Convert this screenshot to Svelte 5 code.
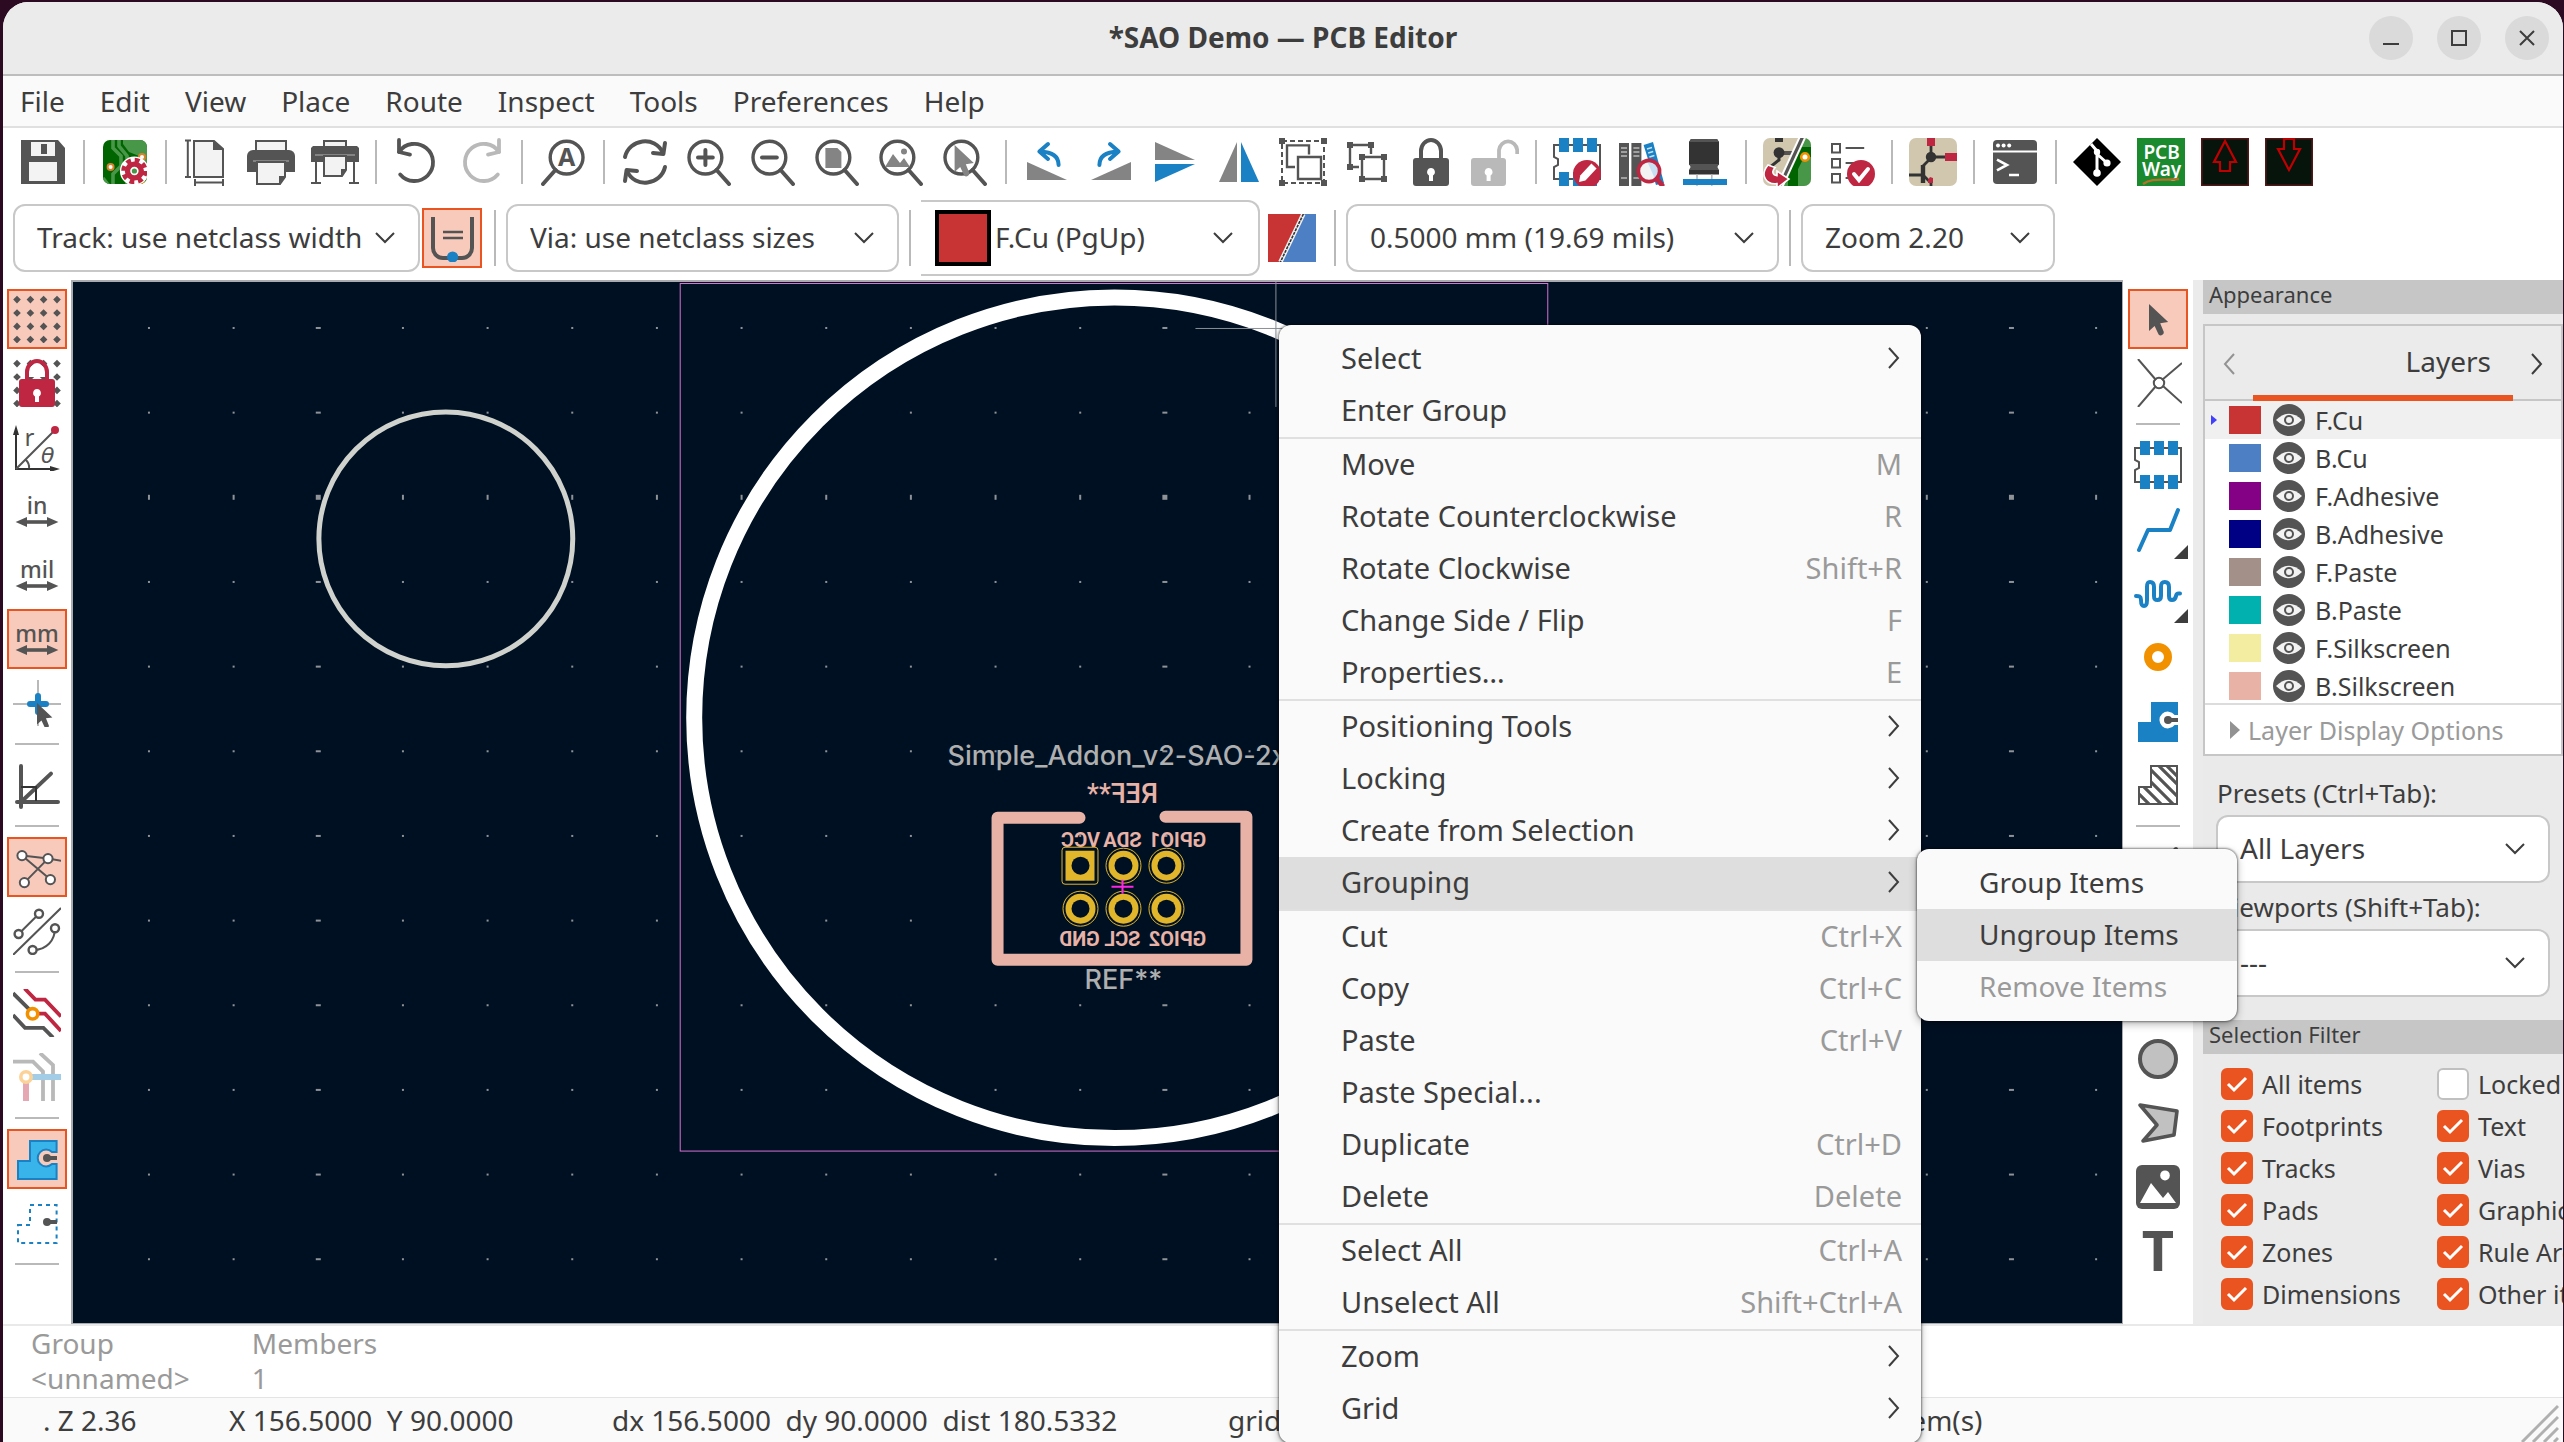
<script lang="ts">
  type Tool = { icon: string; label: string; active?: boolean; more?: boolean; disabled?: boolean };
  type MenuItem = { label: string; keys?: string; sub?: boolean; open?: boolean; disabled?: boolean };

  const GREY = "#545454";
  const BLUE = "#1a81c4";
  const RED = "#bf2641";

  const cursor = (x: number, y: number, fill = GREY) =>
    `<path transform="translate(${x} ${y})" fill="${fill}" d="M0 0V13.5L2.8 11l2 4.2a1.5 1.5 0 0 0 2.6-1.2L5.6 9.6l4-.6z"/>`;
  const lens = (inner: string) =>
    `<g fill="none" stroke="${GREY}" stroke-width="1.7" stroke-linecap="round"><circle cx="10.2" cy="9.8" r="8.2"/><path stroke-width="2" d="M15.8 16l6.2 7"/></g>${inner}`;
  const padlock = (fill: string, hole = "#fff") =>
    `<path fill="none" stroke="${fill}" stroke-width="2" d="M7 11V6.500a5 5.500 0 0 1 10 0V11"/><rect x="3" y="10" width="18" height="14" rx="1.500" fill="${fill}"/><path fill="${hole}" d="M12 15a2 2 0 0 0-1 3.700V21.500h2V18.700A2 2 0 0 0 12 15z"/>`;
  const chip = `<path fill="none" stroke="${GREY}" d="M3 3.500H.5v6l2 1v3l-2 1v6H23.500v-17z"/><path fill="${BLUE}" d="M3 0h5v7H3zM10 0h5v7h-5zM17 0h5v7h-5zM3 17h5v7H3zM10 17h5v7h-5zM17 17h5v7h-5z"/>`;
  const zoneDot = `<circle cx="17" cy="11.500" r="2" fill="${GREY}"/><path stroke="${GREY}" stroke-width="2" d="M17 11.500h5"/>`;
  const unit = (name: string) =>
    `<text x="12" y="13.400" font-family="Noto Sans" font-size="11.500" font-weight="500" text-anchor="middle" fill="${GREY}">${name}</text><path stroke="${GREY}" stroke-width="1.800" d="M5 17.500h14"/><path fill="${GREY}" d="M1.300 17.500L7 15v5zM22.700 17.500L17 15v5z"/>`;

  function dots(): string {
    let out = "";
    for (const x of [2, 8.7, 15.3, 22]) {
      for (const y of [2.3, 9, 15.7, 22.3]) {
        out += `<path fill="${GREY}" d="M${x - 1.9} ${y}l1.900-1.900 1.900 1.900-1.900 1.900z"/>`;
      }
    }
    return out;
  }

  const icons: Record<string, string> = {
    save: `<path fill="${GREY}" d="M1 1h18.500L23 5v18H1z"/><path fill="#f3f3f3" d="M6 2h12v7H6zM5 12h14v9.500H5z"/><path fill="${GREY}" d="M11 3h3v5h-3z"/>`,
    setup: `<clipPath id="bs"><rect x="1" y="1" width="22" height="22" rx="3.500"/></clipPath><g clip-path="url(#bs)"><path fill="#006400" d="M0 0h24v24H0z"/><path fill="#489648" d="M11 0h13v13h-2l-3-4-5-2-3-4z"/><path fill="none" stroke="#489648" stroke-width="1.800" d="M6 0v5l4 4v5l-4 4v6M9 0v4l4 5v15M1 20l3 4"/><circle cx="4.800" cy="14.500" r="1.500" fill="#fff" stroke="#d9822b"/><circle cx="20.500" cy="9.500" r="1.500" fill="#fff" stroke="#d9822b"/><circle cx="20.500" cy="22.500" r="1.500" fill="#f29100"/><circle cx="16.700" cy="16.500" r="4.500" fill="none" stroke="#fff" stroke-width="5.500"/><circle cx="16.700" cy="16.500" r="5.500" fill="none" stroke="${RED}" stroke-width="2.200" stroke-dasharray="2.400 1.920"/><circle cx="16.700" cy="16.500" r="3.400" fill="#489648" stroke="${RED}" stroke-width="2.800"/><circle cx="16.700" cy="16.500" r="1.700" fill="#489648" stroke="#fff" stroke-width=".8"/></g>`,
    page: `<path fill="#f3f3f3" stroke="${GREY}" d="M5.500 1.500h10l4.500 4V19.500H5.500z"/><path fill="${GREY}" d="M15 1l5.500 5H15z"/><path fill="none" stroke="${GREY}" d="M1 1.200h3M1 19.500h3M2.400 1v18.500M6 20.500v3.500M20 20.500v3.500M6 22.300h14"/>`,
    print: `<path fill="#f3f3f3" stroke="${GREY}" d="M4.500 1.500h15V8h-15z"/><path fill="${GREY}" d="M3 6h18a3 3 0 0 1 3 3v8H0V9a3 3 0 0 1 3-3z"/><path stroke="#848484" d="M3 11.500h18"/><path fill="#f3f3f3" stroke="${GREY}" d="M5 12h14v7.500L16.500 23H5z"/><path fill="${GREY}" d="M16 23v-4h3.500z"/>`,
    plot: `<path fill="#f3f3f3" stroke="${GREY}" d="M6.500 1.500h11V5h-11z"/><path fill="${GREY}" d="M1 4h22l1 1v7H0V5z"/><path stroke="#848484" d="M2 8.500h20"/><path fill="#f3f3f3" stroke="${GREY}" d="M6.500 9h11v7l-2 3h-9z"/><path fill="${GREY}" d="M15 19v-3.500h3z"/><path fill="none" stroke="${GREY}" d="M2.500 12v10.500M21.500 12v10.500M0 22.500h5M19 22.500h5"/>`,
    undo: `<g fill="none" stroke="${GREY}" stroke-width="1.900" stroke-linecap="round" stroke-linejoin="round"><path d="M3 7A9.300 9.300 0 1 1 3.600 18.200"/><path d="M3 1v6l5.500 1.300"/></g>`,
    redo: `<g fill="none" stroke="#b9b9b9" stroke-width="1.900" stroke-linecap="round" stroke-linejoin="round"><path d="M21 7A9.300 9.300 0 1 0 20.400 18.200"/><path d="M21 1v6l-5.500 1.300"/></g>`,
    find: `<g fill="none" stroke="${GREY}" stroke-width="1.700" stroke-linecap="round"><circle cx="13.800" cy="9.800" r="8.200"/><path stroke-width="2" d="M8.200 16L2 23"/></g><text x="13.800" y="14.200" text-anchor="middle" font-family="Noto Sans" font-weight="700" font-size="12.500" fill="${GREY}">A</text>`,
    refresh: `<g fill="none" stroke="${GREY}" stroke-width="2" stroke-linecap="round" stroke-linejoin="round"><path d="M2 9.500C4 .5 17 -1.500 21 7.500"/><path d="M22 2.500l-.8 5.500-5.200-.5"/><path d="M22 14.500C20 23.500 7 25.500 3 16.500"/><path d="M2 21.500l.8-5.500 5.200.5"/></g>`,
    zoomIn: lens(`<path stroke="${GREY}" stroke-width="2" stroke-linecap="round" d="M6.500 9.800h7.400M10.200 6v7.500"/>`),
    zoomOut: lens(`<path stroke="${GREY}" stroke-width="2" stroke-linecap="round" d="M6.500 9.800h7.400"/>`),
    zoomFit: lens(`<path fill="#848484" d="M6.200 5h6l2 2v8H6.200z"/>`),
    zoomObj: lens(`<path fill="#848484" d="M4 14.500l4-6.500 3.500 4.500 2-2.500 3 4.500z"/><circle cx="13.500" cy="6.800" r="1.500" fill="#848484"/>`),
    zoomSel: lens(cursor(6.8, 3.5, "#848484")),
    ccw: `<path fill="#848484" d="M2 12v9h20z"/><path fill="none" stroke="${BLUE}" stroke-width="2" stroke-linecap="round" stroke-linejoin="round" d="M17.800 13.500C17.800 9 14 7 8.500 6.800M12.500 3L8.200 6.800l4.300 3.700"/>`,
    cw: `<path fill="#848484" d="M22 12v9H2z"/><path fill="none" stroke="${BLUE}" stroke-width="2" stroke-linecap="round" stroke-linejoin="round" d="M6.200 13.500C6.200 9 10 7 15.500 6.800M11.500 3l4.300 3.800-4.300 3.700"/>`,
    flipV: `<path fill="#848484" d="M2 2v9h20z"/><path fill="${BLUE}" d="M2 22v-9h20z"/>`,
    flipH: `<path fill="#848484" d="M11 2v20H2z"/><path fill="${BLUE}" d="M13 2v20h9z"/>`,
    group: `<path fill="none" stroke="${GREY}" stroke-dasharray="2.500 1.500" d="M1.500 1.500h21v21h-21z"/><path fill="${GREY}" d="M0 0h3v3H0zM21 0h3v3h-3zM0 21h3v3H0zM21 21h3v3h-3z"/><path fill="none" stroke="${GREY}" stroke-width="1.200" d="M8 14.500H4V3.700h11v4.500M9.500 9.500h11.500v11H9.500z"/>`,
    ungroup: `<path fill="none" stroke="${GREY}" stroke-width="1.200" d="M8 14.500H3.500V3.500H14V8M9.500 9.500h11v11h-11z"/><path fill="${GREY}" d="M2 2h3v3H2zM12.500 2h3v3h-3zM2 13h3v3H2zM8 8h3v3H8zM19 8h3v3h-3zM8 19h3v3H8zM19 19h3v3h-3z"/>`,
    lock: padlock(GREY),
    unlock: `<path fill="none" stroke="#b9b9b9" stroke-width="1.900" d="M14 11V6a4.600 5 0 0 1 9.100 0v2"/><rect y="10" width="17.500" height="14" rx="1.500" fill="#b9b9b9"/><path fill="#fff" d="M8.800 15a2 2 0 0 0-1 3.700V21.500h2V18.700a2 2 0 0 0-1-3.700z"/>`,
    fpEdit: `${chip}<circle cx="17" cy="18" r="7" fill="${RED}"/><path fill="#fff" d="M13 22l.6-3.200 5.600-6 2.600 2.400-5.600 6z"/>`,
    library: `<path fill="${GREY}" d="M1 2.500h5V24H1zM7.200 2.500h5V24h-5z"/><path stroke="#b9b9b9" stroke-width=".8" d="M2 5h3M2 7h3M2 9h3M2 20h3M8.200 5h3M8.200 7h3M8.200 9h3M8.200 20h3"/><path fill="${BLUE}" d="M13.300 3.500L18 2l5.500 20.500-4 1z"/><path stroke="#c8e0f2" stroke-width=".8" d="M15 5.500l2.500-.7M15.600 7.500l2.500-.7M16.200 9.500l2.500-.7"/><circle cx="16" cy="16.500" r="5.300" fill="#f3f3f3"/><path fill="#c8e0f2" d="M15 11.500a5 5 0 0 1 4 9z"/><circle cx="16" cy="16.500" r="5.300" fill="none" stroke="${RED}" stroke-width="1.800"/><path stroke="${RED}" stroke-width="2.500" stroke-linecap="round" d="M20 20.500l2.500 3"/>`,
    view3d: `<path fill="#333" d="M5 .5h13l1 1.500V13.500H4V2z"/><path fill="${GREY}" d="M5 .5h13l1 1.500H4zM4 13h15l-.8 1.500.8 1.500H4l.8-1.500z"/><path fill="#333" d="M4 16h15v2.300H4z"/><path stroke="#b9b9b9" stroke-width=".8" d="M8 18.300V24M15.400 18.300V24"/><path fill="${BLUE}" d="M1 20.500h22v3H1z"/>`,
    update: `<clipPath id="up"><rect width="24" height="24" rx="3.500"/></clipPath><g clip-path="url(#up)"><path fill="#d1c6ae" d="M0 0h24v24H0z"/><path fill="#489648" d="M20 0h4v24H9z"/><path stroke="#006400" stroke-width="5" fill="none" d="M24 7h-5L15 15v9"/><path stroke="${GREY}" stroke-width="2" d="M8 7.500h7"/><circle cx="21" cy="9.500" r="1.900" fill="#fff" stroke="#f29100" stroke-width="1.300"/><circle cx="8" cy="7.300" r="2.700" fill="#333"/><path stroke="#333" fill="none" stroke-width="1.500" d="M8 8v3l-5 4"/><path fill="#333" d="M6 0h4v2H6z"/><path stroke="#fff" stroke-width="3.600" d="M20 -1L8 25"/><path stroke="${GREY}" stroke-width="1.600" d="M20 -1L8 25"/></g><path fill="${RED}" stroke="#fff" stroke-width=".8" d="M2.500 13.500C-2 19 2 23.500 7 22.800V25l6-4.500-6-4v2.300c-2 0-3-2-1-4z"/>`,
    drc: `<path fill="none" stroke="${GREY}" d="M2.500 3H6.500V7.200H2.500zM2.500 10.500H6.500V14.700H2.500zM2.500 18H6.500V22.200H2.500z"/><path stroke="${GREY}" stroke-width="1.100" d="M9.300 5h9.300M9.300 12.500h6M9.300 20h4"/><circle cx="17" cy="18" r="7" fill="${RED}"/><path fill="none" stroke="#fff" stroke-width="2" stroke-linecap="round" d="M13.500 18l2.500 3 4.500-5.500"/>`,
    schematic: `<rect width="24" height="24" rx="3.500" fill="#d1c6ae"/><path fill="none" stroke="#333" stroke-width="1.400" d="M11 3v7l-4 4M11 9.500h8M0 18.500h6M7 18.500l4 4V24"/><path stroke="#333" stroke-width="2.200" d="M7 13.500v9"/><circle cx="11" cy="9.500" r="2.600" fill="#333"/><path fill="${RED}" d="M9 0h4v4H9zM18 7.500h6v4h-6zM9.500 21l1-1.500 1.500.5v2.500H9.500z"/>`,
    console: `<rect x="1" y="1" width="22" height="22" rx="2" fill="${GREY}"/><path stroke="#fff" d="M1 6.800h22"/><g fill="#fff"><circle cx="3.500" cy="3.800" r="1"/><circle cx="6.300" cy="3.800" r="1"/><circle cx="9.100" cy="3.800" r="1"/></g><path fill="none" stroke="#fff" stroke-width="1.300" d="M3 10.800l5 2.700-5 2.700M9 18.500h5"/>`,
    git: `<path fill="#000" d="M12 0l12 12-12 12L0 12z"/><g stroke="#fff" stroke-width="1.500" fill="none"><path d="M9 3l3 3.500V18M12 8l5 4.500"/></g><g fill="#fff"><circle cx="12" cy="7" r="1.600"/><circle cx="12" cy="17.500" r="1.900"/><circle cx="17" cy="12.500" r="1.800"/></g>`,
    pcbway: `<rect width="24" height="24" fill="#1b8a2f"/><g font-family="Noto Sans" font-weight="600" font-size="9.500" fill="#fff" text-anchor="middle"><text x="12.300" y="10.600">PCB</text><text x="12.300" y="19.200">Way</text></g><path fill="none" stroke="#b5702a" stroke-width="1.200" d="M3 23c5-3.500 10-1.500 18-2.500"/>`,
    arrowUp: `<path fill="#06140c" stroke="#501818" stroke-width=".8" d="M.4.4h23.200v23.200H.4z"/><path fill="none" stroke="#c00000" stroke-width="1.100" d="M12 1.500l5.500 10.500h-3v4.500h-5V12h-3z"/>`,
    arrowDown: `<path fill="#06140c" stroke="#501818" stroke-width=".8" d="M.4.4h23.200v23.200H.4z"/><path fill="none" stroke="#c00000" stroke-width="1.100" d="M12 16L6.500 5.500h3V.5h5v5h3z"/>`,
    trackAuto: `<path fill="none" stroke="${GREY}" stroke-width="2" d="M2.500 1.500V17a5 5 0 0 0 5 5h9.500a5 5 0 0 0 5-5V1.500"/><path stroke="${GREY}" stroke-width="1.200" d="M7.500 9h10M7.500 12h10"/><circle cx="12.300" cy="21.500" r="2.800" fill="${BLUE}"/>`,
    layerPair: `<path fill="#c83434" d="M0 0h24v24H0z"/><path fill="#4d7fc4" d="M18 0h6v24H6.500z"/><path stroke="#f3f3f3" stroke-width="2.200" d="M17.700 0L6.200 24"/><path stroke="#333" stroke-width=".8" stroke-dasharray="1.500 .5" d="M17.700 0L6.200 24"/>`,
    grid: dots(),
    gridLock: `${dots()}<path fill="#fff" d="M8 9V6.500a4 4 0 0 1 8 0V9z"/>${padlock(RED)}`,
    polar: `<path fill="none" stroke="#333" d="M1.500 4v19H20"/><path fill="#333" d="M1.500 1L0 6h3zM23.500 23l-5-1.500v3z"/><path fill="none" stroke="${GREY}" d="M1.500 23L20 4.500M6.500 18.500q1.800 1.800 1.500 4"/><circle cx="21" cy="3.500" r="2" fill="${RED}"/><text x="5.800" y="11.500" font-family="Noto Sans" font-size="12" fill="${GREY}">r</text><text x="14" y="20" font-family="DejaVu Sans" font-style="oblique" font-size="11" fill="${GREY}">θ</text>`,
    inch: unit("in"),
    mil: unit("mil"),
    mm: unit("mm"),
    origin: `<path stroke="#b9b9b9" d="M0 12.500h24M12.500.5v23"/><path stroke="${BLUE}" stroke-width="3" stroke-linecap="round" d="M8.500 12.500h8M12.500 8.500v8"/><g transform="translate(12 12) scale(.8)">${cursor(0, 0)}</g>`,
    angle: `<g fill="none" stroke="${GREY}" stroke-width="2" stroke-linecap="round"><path d="M4 2.500V23M2 20.500h20.500M4 20.500L19 6.300"/></g><path fill="none" stroke="#333" d="M4 13h7.500v7"/>`,
    ratsnest: `<g fill="none" stroke="${GREY}"><path d="M4.500 6.300l13 1.500 7 1.200M4.500 6.300l14.200 12M5.700 19.800l11.800-12"/><g fill="#fff"><circle cx="4.500" cy="6.300" r="2.300"/><circle cx="17.500" cy="7.800" r="2.300"/><circle cx="5.700" cy="19.800" r="2.300"/><circle cx="18.700" cy="18.300" r="2.300"/></g></g>`,
    ratsCurved: `<g fill="none" stroke="${GREY}"><path d="M0 24L24 .5M2.800 13.500L13 3.400M10 21.500c7 0 11-5 11-11"/><g fill="#fff" stroke-width="1.200"><circle cx="2.800" cy="13.500" r="2"/><circle cx="13" cy="3.400" r="2"/><circle cx="21" cy="10.600" r="2"/><circle cx="9.800" cy="21.500" r="2"/></g></g>`,
    tracks: `<g fill="none" stroke-width="1.900"><path stroke="${GREY}" d="M0 2.100l9 9M0 13l6 6.400h9.200l4.800 4.900"/><path stroke="${RED}" d="M5.800-.3L11.200 5.300H16l8 8.400M10 12.300h6l8 8.700"/></g><circle cx="9.800" cy="12.400" r="2.600" fill="#fff" stroke="#f29100" stroke-width="1.800"/>`,
    tracksDim: `<g fill="none" stroke="#b9b9b9" stroke-width="1.900"><path d="M0 4.300h10l5 5V24M13.500 0L20 6v18"/></g><path stroke="#e5a8b3" stroke-width="3" d="M6.500 13v11"/><path stroke="#a3cce7" stroke-width="3" d="M8 12h16"/><circle cx="6.500" cy="12" r="2.600" fill="#fff" stroke="#fbd399" stroke-width="1.800"/>`,
    zoneFill: `<path fill="#38b4eb" stroke="${BLUE}" d="M2.500 13h6V3H21.800v5.500H19.500a4.200 4.200 0 1 0 0 6h2.300V22H2.500z"/>${zoneDot}`,
    zoneOutline: `<path fill="none" stroke="${BLUE}" stroke-dasharray="2 2" d="M2.500 13h6V3H21.800v19H2.500z"/>${zoneDot}`,
    select: cursor(7.5, 4.5),
    localRats: `<g fill="none" stroke="${GREY}"><path d="M2 0l9 10.500M24 2L14 10.500M24 22l-9.500-8.500M2 24l9-10.500"/><circle cx="12.500" cy="12" r="2.600"/></g>`,
    footprint: chip,
    route: `<path fill="none" stroke="${BLUE}" stroke-width="2" stroke-linecap="round" stroke-linejoin="round" d="M2.500 22.500L7 12.500h11l4-10"/>`,
    tune: `<path fill="none" stroke="${BLUE}" stroke-width="2" stroke-linecap="round" d="M1 13.500c1.500 0 2.500 0 2.500 2s.3 3 1.500 3 1.500-1 1.500-3V9c0-2 .5-2.500 1.500-2.500S10 7 10 9v4.500c0 1.500.5 2 1.700 2s1.800-.5 1.800-2V9c0-2 .7-2.500 1.900-2.500S17.500 7 17.500 9v4.500c0 1.500.5 2 1.500 2s1.700-.5 2-2 .8-1.200 2-1.200"/>`,
    via: `<circle cx="12" cy="12" r="5" fill="none" stroke="#f29100" stroke-width="4"/>`,
    zone: `<path fill="${BLUE}" d="M2 12.500h6.500V2.500H22V9h-1.700a4.200 4.200 0 1 0 0 5H22v8.500H2z"/>${zoneDot}`,
    ruleArea: `<clipPath id="ra"><path d="M2.500 13h6V2.500H21.500v19h-19z"/></clipPath><path clip-path="url(#ra)" stroke="${GREY}" stroke-width="1.600" d="M-8 6L12 26M-4 4L18 26M0 2l24 24M4 0l22 22M9-1l18 18M13-1l14 14"/><path fill="none" stroke="${GREY}" d="M2.500 13h6V2.500H21.500v19h-19z"/>`,
    line: `<path stroke="${GREY}" stroke-width="2" stroke-linecap="round" d="M3 21L21 3"/>`,
    arc: `<path fill="none" stroke="${GREY}" stroke-width="2" stroke-linecap="round" d="M3 21C3 10 10 3 21 3"/>`,
    rect: `<path fill="#c1c1c1" stroke="${GREY}" stroke-width="2" d="M3 5h18v14H3z"/>`,
    circle: `<circle cx="12" cy="12" r="9" fill="#c1c1c1" stroke="${GREY}" stroke-width="2"/>`,
    polygon: `<path fill="#c1c1c1" stroke="${GREY}" stroke-width="1.800" stroke-linejoin="round" d="M3 3l18.500 3-1.500 12L4.500 21l7-8z"/>`,
    image: `<rect x="1" y="1" width="22" height="22" rx="3" fill="${GREY}"/><path fill="#fff" d="M3 20l5.500-10 6 7.500 2.500-3 4 5.500z"/><ellipse cx="15.500" cy="6.200" rx="2.400" ry="2.500" fill="#fff"/>`,
    text: `<text x="12" y="22" text-anchor="middle" font-family="Noto Sans" font-weight="700" font-size="28" fill="${GREY}">T</text>`,
  };

  const menus = ["File", "Edit", "View", "Place", "Route", "Inspect", "Tools", "Preferences", "Help"];

  const toolbar: Tool[][] = [
    [{ icon: "save", label: "Save" }],
    [{ icon: "setup", label: "Board Setup" }],
    [{ icon: "page", label: "Page Settings" }, { icon: "print", label: "Print" }, { icon: "plot", label: "Plot" }],
    [{ icon: "undo", label: "Undo" }, { icon: "redo", label: "Redo", disabled: true }],
    [{ icon: "find", label: "Find" }],
    [
      { icon: "refresh", label: "Refresh" },
      { icon: "zoomIn", label: "Zoom In" },
      { icon: "zoomOut", label: "Zoom Out" },
      { icon: "zoomFit", label: "Zoom to Fit" },
      { icon: "zoomObj", label: "Zoom to Objects" },
      { icon: "zoomSel", label: "Zoom to Selection" },
    ],
    [
      { icon: "ccw", label: "Rotate Counterclockwise" },
      { icon: "cw", label: "Rotate Clockwise" },
      { icon: "flipV", label: "Mirror Vertically" },
      { icon: "flipH", label: "Mirror Horizontally" },
      { icon: "group", label: "Group" },
      { icon: "ungroup", label: "Ungroup" },
      { icon: "lock", label: "Lock" },
      { icon: "unlock", label: "Unlock", disabled: true },
    ],
    [
      { icon: "fpEdit", label: "Footprint Editor" },
      { icon: "library", label: "Footprint Library Browser" },
      { icon: "view3d", label: "3D Viewer" },
    ],
    [{ icon: "update", label: "Update PCB from Schematic" }, { icon: "drc", label: "Design Rules Checker" }],
    [{ icon: "schematic", label: "Schematic Editor" }],
    [{ icon: "console", label: "Scripting Console" }],
    [
      { icon: "git", label: "Git" },
      { icon: "pcbway", label: "PCBWay" },
      { icon: "arrowUp", label: "Save Layout" },
      { icon: "arrowDown", label: "Restore Layout" },
    ],
  ];

  const leftTools: Tool[][] = [
    [
      { icon: "grid", label: "Show Grid", active: true },
      { icon: "gridLock", label: "Grid Overrides" },
      { icon: "polar", label: "Polar Coordinates" },
      { icon: "inch", label: "Inches" },
      { icon: "mil", label: "Mils" },
      { icon: "mm", label: "Millimeters", active: true },
      { icon: "origin", label: "Full-Window Crosshairs" },
    ],
    [{ icon: "angle", label: "Constrain to H, V, 45" }],
    [
      { icon: "ratsnest", label: "Show Ratsnest", active: true },
      { icon: "ratsCurved", label: "Curved Ratsnest Lines" },
    ],
    [
      { icon: "tracks", label: "Inactive Layer View Mode" },
      { icon: "tracksDim", label: "Net Highlighting" },
    ],
    [
      { icon: "zoneFill", label: "Draw Zone Fills", active: true },
      { icon: "zoneOutline", label: "Draw Zone Outlines" },
    ],
    [],
  ];

  const rightTools: Tool[][] = [
    [
      { icon: "select", label: "Select Items", active: true },
      { icon: "localRats", label: "Local Ratsnest" },
    ],
    [
      { icon: "footprint", label: "Place Footprints" },
      { icon: "route", label: "Route Tracks", more: true },
      { icon: "tune", label: "Tune Length", more: true },
      { icon: "via", label: "Place Vias" },
      { icon: "zone", label: "Draw Filled Zones" },
      { icon: "ruleArea", label: "Draw Rule Areas" },
    ],
    [
      { icon: "line", label: "Draw Lines" },
      { icon: "arc", label: "Draw Arcs" },
      { icon: "rect", label: "Draw Rectangles" },
      { icon: "circle", label: "Draw Circles" },
      { icon: "polygon", label: "Draw Polygons" },
      { icon: "image", label: "Place Images" },
      { icon: "text", label: "Place Text" },
    ],
  ];

  const contextMenu: MenuItem[][] = [
    [{ label: "Select", sub: true }, { label: "Enter Group" }],
    [
      { label: "Move", keys: "M" },
      { label: "Rotate Counterclockwise", keys: "R" },
      { label: "Rotate Clockwise", keys: "Shift+R" },
      { label: "Change Side / Flip", keys: "F" },
      { label: "Properties…", keys: "E" },
    ],
    [
      { label: "Positioning Tools", sub: true },
      { label: "Locking", sub: true },
      { label: "Create from Selection", sub: true },
      { label: "Grouping", sub: true, open: true },
    ],
    [
      { label: "Cut", keys: "Ctrl+X" },
      { label: "Copy", keys: "Ctrl+C" },
      { label: "Paste", keys: "Ctrl+V" },
      { label: "Paste Special..." },
      { label: "Duplicate", keys: "Ctrl+D" },
      { label: "Delete", keys: "Delete" },
    ],
    [
      { label: "Select All", keys: "Ctrl+A" },
      { label: "Unselect All", keys: "Shift+Ctrl+A" },
    ],
    [
      { label: "Zoom", sub: true },
      { label: "Grid", sub: true },
    ],
  ];

  const groupingMenu: MenuItem[][] = [
    [{ label: "Group Items" }, { label: "Ungroup Items", open: true }, { label: "Remove Items", disabled: true }],
  ];

  const layers = [
    { name: "F.Cu", color: "#c83434" },
    { name: "B.Cu", color: "#4d7fc4" },
    { name: "F.Adhesive", color: "#840084" },
    { name: "B.Adhesive", color: "#000084" },
    { name: "F.Paste", color: "#a39189" },
    { name: "B.Paste", color: "#00b1b0" },
    { name: "F.Silkscreen", color: "#f2eda1" },
    { name: "B.Silkscreen", color: "#e8b2a7" },
  ];
  let activeLayer = $state("F.Cu");

  let filters = $state([
    { name: "All items", on: true },
    { name: "Locked items", on: false },
    { name: "Footprints", on: true },
    { name: "Text", on: true },
    { name: "Tracks", on: true },
    { name: "Vias", on: true },
    { name: "Pads", on: true },
    { name: "Graphics", on: true },
    { name: "Zones", on: true },
    { name: "Rule Areas", on: true },
    { name: "Dimensions", on: true },
    { name: "Other items", on: true },
  ]);

  const pads = [
    { x: 1123, y: 866 },
    { x: 1166, y: 866 },
    { x: 1080, y: 909 },
    { x: 1123, y: 909 },
    { x: 1166, y: 909 },
  ];

  // pin names are on the back silkscreen, so they are mirrored
  const pinNames = [
    { name: "VCC", x: 1080, y: 847 },
    { name: "SDA", x: 1122, y: 847 },
    { name: "GPIO1", x: 1177, y: 847 },
    { name: "GND", x: 1079, y: 946 },
    { name: "SCL", x: 1122, y: 946 },
    { name: "GPIO2", x: 1177, y: 946 },
  ];

  const GRID = 84.7;
  const gridCols = Array.from({ length: 24 }, (_, i) => i);
  const gridRows = Array.from({ length: 12 }, (_, i) => i);
  const isMajor = (i: number) => i % 10 === 2;
</script>

{#snippet toolButton(tool: Tool)}
  <button class="tool" class:active={tool.active} type="button" aria-label={tool.label} disabled={tool.disabled}>
    <svg viewBox="0 0 24 24" aria-hidden="true">{@html icons[tool.icon]}</svg>
    {#if tool.more}<span class="more"></span>{/if}
  </button>
{/snippet}

{#snippet dropdown(id: string, label: string, value: string)}
  <div class="dropdown {id}">
    <select {id} aria-label={label}><option>{value}</option></select>
    <svg class="chevron" viewBox="0 0 20 12" aria-hidden="true"><path d="M1 1l9 9 9-9" /></svg>
  </div>
{/snippet}

{#snippet menuList(groups: MenuItem[][])}
  {#each groups as group}
    <ul>
      {#each group as item}
        <li>
          <button class="item" class:open={item.open} type="button" disabled={item.disabled}>
            <span>{item.label}</span>
            {#if item.keys}<kbd>{item.keys}</kbd>{/if}
            {#if item.sub}
              <svg class="arrow" viewBox="0 0 12 22" aria-hidden="true"><path d="M1 1l9 10-9 10" /></svg>
            {/if}
          </button>
        </li>
      {/each}
    </ul>
  {/each}
{/snippet}

<div class="window">
  <header class="titlebar">
    <h1>*SAO Demo — PCB Editor</h1>
    <div class="controls">
      <button type="button" aria-label="Minimize"><svg viewBox="0 0 20 20"><path d="M2 16h16" /></svg></button>
      <button type="button" aria-label="Maximize"><svg viewBox="0 0 20 20"><path d="M3 3h14v14H3z" /></svg></button>
      <button type="button" aria-label="Close"><svg viewBox="0 0 20 20"><path d="M3 3l14 14M17 3L3 17" /></svg></button>
    </div>
  </header>

  <nav class="menubar">
    {#each menus as menu}
      <button type="button">{menu}</button>
    {/each}
  </nav>

  <div class="toolbar">
    {#each toolbar as group, i}
      {#if i > 0}<span class="sep"></span>{/if}
      {#each group as tool}
        {@render toolButton(tool)}
      {/each}
    {/each}
  </div>

  <div class="toolbar options">
    {@render dropdown("track-width", "Track width", "Track: use netclass width")}
    {@render toolButton({ icon: "trackAuto", label: "Use existing track width", active: true })}
    <span class="sep"></span>
    {@render dropdown("via-size", "Via size", "Via: use netclass sizes")}
    <span class="sep"></span>
    <div class="layer-box">
      <span class="layer-swatch"></span>
      {@render dropdown("active-layer", "Active layer", "F.Cu (PgUp)")}
    </div>
    {@render toolButton({ icon: "layerPair", label: "Set layer pair" })}
    <span class="sep"></span>
    {@render dropdown("grid-size", "Grid", "0.5000 mm (19.69 mils)")}
    <span class="sep"></span>
    {@render dropdown("zoom-level", "Zoom", "Zoom 2.20")}
  </div>

  <main>
    <div class="sidebar left">
      {#each leftTools as group, i}
        {#if i > 0}<span class="sep"></span>{/if}
        {#each group as tool}
          {@render toolButton(tool)}
        {/each}
      {/each}
    </div>

    <div class="canvas">
      <svg viewBox="72 282 2050 1042" preserveAspectRatio="xMinYMin slice" role="img" aria-label="Board">
        <g fill="#8f9296">
          {#each gridCols as col}
            {#each gridRows as row}
              <rect
                x={147 + col * GRID - (isMajor(col) ? 1.5 : 0)}
                y={327 + row * GRID - (isMajor(row) ? 1.5 : 0)}
                width={isMajor(col) ? 5 : 2}
                height={isMajor(row) ? 5 : 2}
              />
            {/each}
          {/each}
        </g>

        <g fill="none">
          <rect x="679.500" y="283.500" width="868" height="868" stroke="#d873d2" />
          <circle cx="1114" cy="718" r="420.500" stroke="#fff" stroke-width="16" />
          <circle cx="445" cy="539" r="127" stroke="#d0d2cd" stroke-width="5" />
          <path d="M1275.500 282V407M1195 328.500H1357" stroke="#8a8f96" />
        </g>

        <g class="fab">
          <text x="947" y="765">Simple_Addon_v2-SAO-2x03</text>
          <text x="1123" y="989" text-anchor="middle">REF**</text>
        </g>

        <g fill="none" stroke="#e8b2a7" stroke-width="12" stroke-linecap="round" stroke-linejoin="round">
          <path d="M1079 818H997V960H1246V817H1165" />
        </g>
        <g class="silk">
          <text class="ref" transform="translate(1122 803) scale(-1 1)">REF**</text>
          {#each pinNames as pin}
            <text transform="translate({pin.x} {pin.y}) scale(-1 1)">{pin.name}</text>
          {/each}
        </g>

        <g fill="#e2b62b" stroke="#e2b62b">
          <rect x="1061.500" y="847.500" width="36" height="37" rx="3" fill="none" />
          <rect x="1065" y="851" width="29" height="30" stroke="none" />
          <circle class="hole" cx="1080" cy="866" r="9" />
          {#each pads as pad}
            <circle cx={pad.x} cy={pad.y} r="17.500" fill="none" />
            <circle cx={pad.x} cy={pad.y} r="15" stroke="none" />
            <circle class="hole" cx={pad.x} cy={pad.y} r="9" />
          {/each}
        </g>
        <path d="M1111 887h22M1122 880v14" stroke="#ff26e2" stroke-width="2" />
      </svg>
    </div>

    <div class="sidebar right">
      {#each rightTools as group, i}
        {#if i > 0}<span class="sep"></span>{/if}
        {#each group as tool}
          {@render toolButton(tool)}
        {/each}
      {/each}
    </div>

    <aside>
      <h2>Appearance</h2>
      <section class="notebook">
        <div class="tabs">
          <button class="scroll" type="button" aria-label="Previous tab" disabled>
            <svg viewBox="0 0 12 22"><path d="M11 1L2 11l9 10" /></svg>
          </button>
          <button class="tab" type="button">Layers</button>
          <button class="scroll" type="button" aria-label="Next tab">
            <svg viewBox="0 0 12 22"><path d="M1 1l9 10-9 10" /></svg>
          </button>
        </div>
        <ul class="layers">
          {#each layers as layer (layer.name)}
            <li class:current={layer.name === activeLayer}>
              <span class="marker"></span>
              <span class="swatch" style="background: {layer.color}"></span>
              <button class="eye" type="button" aria-label="Toggle {layer.name}">
                <svg viewBox="0 0 32 32">
                  <circle cx="16" cy="16" r="16" fill="#545454" />
                  <path fill="#f3f3f3" d="M3 16q13-12.500 26 0q-13 12.500-26 0z" />
                  <circle cx="16" cy="16" r="4" fill="none" stroke="#545454" stroke-width="2" />
                </svg>
              </button>
              <button class="name" type="button" onclick={() => { activeLayer = layer.name; }}>{layer.name}</button>
            </li>
          {/each}
        </ul>
        <button class="expander" type="button">
          <svg viewBox="0 0 10 18"><path d="M0 0l10 9-10 9z" fill="#929292" /></svg>
          Layer Display Options
        </button>
      </section>

      <div class="views">
        <label for="presets">Presets (Ctrl+Tab):</label>
        {@render dropdown("presets", "Presets", "All Layers")}
        <label for="viewports">Viewports (Shift+Tab):</label>
        {@render dropdown("viewports", "Viewports", "---")}
      </div>

      <h2>Selection Filter</h2>
      <div class="filters">
        {#each filters as filter (filter.name)}
          <label>
            <input type="checkbox" bind:checked={filter.on} />
            <svg viewBox="0 0 32 32" aria-hidden="true"><path d="M7 16l6 6L25 10" /></svg>
            {filter.name}
          </label>
        {/each}
      </div>
    </aside>
  </main>

  <dl class="info">
    <div><dt>Group</dt><dd>&lt;unnamed&gt;</dd></div>
    <div><dt>Members</dt><dd>1</dd></div>
  </dl>

  <footer>
    <span>. Z 2.36</span>
    <span>X 156.5000&nbsp; Y 90.0000</span>
    <span>dx 156.5000&nbsp; dy 90.0000&nbsp; dist 180.5332</span>
    <span>grid 0.5000</span>
    <span>Select item(s)</span>
    <svg class="grip" viewBox="0 0 38 38" aria-hidden="true"><path d="M1 38L37 2M12 38L37 13M23 38L37 24M33 38l4-4" /></svg>
  </footer>
</div>

<div class="popup context">{@render menuList(contextMenu)}</div>
<div class="popup submenu">{@render menuList(groupingMenu)}</div>

<style>
  :global(body) {
    background: #2c0a22;
    overflow: hidden;
  }

  .window,
  .popup {
    font-family: "Noto Sans", "Open Sans", sans-serif;
    font-size: 28px;
    line-height: 36px;
    color: #3d3d3d;
  }

  .window {
    box-sizing: border-box;
    height: 100vh;
    display: flex;
    flex-direction: column;
    border: solid transparent;
    border-width: 2px 1px 0 3px;
    border-radius: 28px 28px 0 0;
    background: #fff padding-box;
    overflow: hidden;
  }

  button {
    font: inherit;
    color: inherit;
    background: none;
    border: none;
    padding: 0;
    margin: 0;
  }

  ul {
    list-style: none;
    margin: 0;
    padding: 0;
  }

  svg {
    display: block;
  }

  .titlebar {
    display: grid;
    grid-template-columns: 1fr auto 1fr;
    align-items: center;
    height: 72px;
    flex-shrink: 0;
    background: #ebebeb;
    border-bottom: 2px solid #bdbdbd;
  }

  h1 {
    grid-column: 2;
    margin: 0;
    padding-bottom: 2px;
    font-size: 28px;
    font-weight: 700;
  }

  .controls {
    display: flex;
    justify-content: flex-end;
    gap: 24px;
    padding-right: 14px;
  }

  .controls button {
    display: grid;
    place-items: center;
    width: 44px;
    height: 44px;
    border-radius: 50%;
    background: #dadada;
  }

  .controls svg {
    width: 20px;
    fill: none;
    stroke: #3d3d3d;
    stroke-width: 2;
  }

  .menubar {
    display: flex;
    gap: 1px;
    height: 50px;
    flex-shrink: 0;
    background: #fafafa;
    border-bottom: 2px solid #e0e0e0;
  }

  .menubar button {
    padding: 0 17px;
  }

  .toolbar {
    display: flex;
    align-items: center;
    flex-shrink: 0;
    height: 68px;
    padding-left: 8px;
  }

  .sep {
    width: 2px;
    height: 44px;
    margin: 0 8px;
    background: #b9b9b9;
  }

  .tool {
    position: relative;
    box-sizing: border-box;
    flex-shrink: 0;
    width: 60px;
    height: 60px;
    margin: 2px;
    border: 2px solid transparent;
    display: grid;
    place-items: center;
  }

  .tool svg {
    width: 48px;
    height: 48px;
  }

  .tool.active {
    background: #f8cabb;
    border-color: #e95420;
  }

  .more {
    position: absolute;
    right: -2px;
    bottom: -2px;
    border: 7px solid #3d3d3d;
    border-top-color: transparent;
    border-left-color: transparent;
  }

  .options {
    height: 84px;
    padding-left: 10px;
  }

  .options .sep {
    height: 56px;
    margin: 0 10px;
  }

  .dropdown {
    display: grid;
    align-items: center;
  }

  .dropdown > * {
    grid-area: 1 / 1;
  }

  select {
    appearance: none;
    box-sizing: border-box;
    width: 100%;
    height: 68px;
    padding: 0 46px 2px 22px;
    border: 2px solid #c8c8c8;
    border-radius: 12px;
    background: #fff;
    font: inherit;
    color: inherit;
  }

  .chevron {
    justify-self: end;
    width: 20px;
    margin-right: 25px;
    fill: none;
    stroke: #3d3d3d;
    stroke-width: 2;
    pointer-events: none;
  }

  .track-width {
    width: 407px;
  }

  .via-size {
    width: 393px;
  }

  .grid-size {
    width: 433px;
  }

  .zoom-level {
    width: 254px;
  }

  .layer-box {
    box-sizing: border-box;
    display: flex;
    align-items: center;
    width: 339px;
    height: 76px;
    padding-left: 14px;
    border: 2px solid #c8c8c8;
    border-left: none;
    border-radius: 0 12px 12px 0;
  }

  .layer-swatch {
    box-sizing: border-box;
    width: 56px;
    height: 56px;
    border: 4px solid #000;
    background: #c83434;
  }

  .active-layer {
    flex: 1;
  }

  .active-layer select {
    height: 60px;
    padding-left: 4px;
    border: none;
  }

  main {
    flex: 1;
    min-height: 0;
    display: flex;
  }

  .sidebar {
    box-sizing: border-box;
    width: 68px;
    flex-shrink: 0;
    padding-top: 7px;
    display: flex;
    flex-direction: column;
    align-items: center;
    overflow: hidden;
  }

  .sidebar .sep {
    flex-shrink: 0;
    width: 44px;
    height: 2px;
    margin: 8px 0;
  }

  .right {
    width: 70px;
  }

  .canvas {
    flex: 1;
    min-width: 0;
    background: #001023;
    border: solid #a9abae;
    border-width: 2px 1px 1px 2px;
  }

  .canvas svg {
    width: 100%;
    height: 100%;
  }

  .fab {
    font-family: Inter, sans-serif;
    font-size: 27px;
    font-weight: 500;
    font-feature-settings: "calt" 0;
    fill: #afafaf;
  }

  .silk {
    font-family: Roboto, sans-serif;
    font-size: 20px;
    font-weight: 700;
    fill: #e8b2a7;
    text-anchor: middle;
  }

  .silk .ref {
    font-size: 27px;
    font-weight: 500;
  }

  .hole {
    fill: #001023;
    stroke: none;
  }

  aside {
    box-sizing: border-box;
    width: 370px;
    flex-shrink: 0;
    border-left: 10px solid #ebebeb;
    background: #eaeaea;
    font-size: 25px;
    white-space: nowrap;
    overflow: hidden;
  }

  h2 {
    margin: 0;
    padding: 0 6px;
    height: 34px;
    line-height: 28px;
    font-size: 22px;
    font-weight: 400;
    background: #c6c6c6;
  }

  .notebook {
    margin-top: 10px;
    border: 2px solid #c6c6c6;
    background: #fff;
  }

  .tabs {
    display: flex;
    height: 75px;
    background: #ebebeb;
    box-shadow: inset 0 -2px #c6c6c6;
  }

  .scroll {
    width: 48px;
    display: grid;
    place-items: center;
  }

  .scroll svg {
    width: 12px;
    fill: none;
    stroke: #3d3d3d;
    stroke-width: 2;
  }

  .scroll:disabled {
    opacity: 0.5;
  }

  .tab {
    flex: 1;
    padding-right: 22px;
    text-align: right;
    font-size: 28px;
    border-bottom: 6px solid #e95420;
  }

  .layers {
    height: 302px;
    overflow: hidden;
    border-bottom: 2px solid #dcdcdc;
  }

  .layers li {
    display: flex;
    align-items: center;
    height: 38px;
    padding-left: 6px;
  }

  .current {
    background: #f0f0f0;
  }

  .marker {
    box-sizing: border-box;
    width: 18px;
    border: solid transparent;
    border-width: 5px 0 5px 6px;
  }

  .current .marker {
    border-left-color: #4040ff;
    border-right-width: 12px;
  }

  .swatch {
    width: 32px;
    height: 28px;
  }

  .eye svg {
    width: 32px;
    margin: 0 10px 0 12px;
  }

  .expander {
    display: flex;
    align-items: center;
    gap: 8px;
    height: 49px;
    padding-left: 25px;
    color: #9a9a9a;
  }

  .expander svg {
    width: 10px;
  }

  .views {
    box-sizing: border-box;
    height: 264px;
    padding: 19px 13px 0;
  }

  .views label {
    display: block;
    padding-left: 1px;
    font-size: 26px;
  }

  .views .dropdown {
    margin: 4px 0 6px;
    font-size: 28px;
  }

  .filters {
    display: grid;
    grid-template-columns: 216px 216px;
    grid-auto-rows: 42px;
    padding: 9px 18px;
  }

  .filters label {
    display: grid;
    grid-template-columns: 32px auto;
    column-gap: 9px;
    justify-content: start;
    align-items: center;
  }

  .filters input {
    appearance: none;
    box-sizing: border-box;
    grid-area: 1 / 1;
    width: 32px;
    height: 32px;
    margin: 0;
    border: 2px solid #c0c0c0;
    border-radius: 6px;
    background: #fff;
  }

  .filters input:checked {
    border-color: #e95420;
    background: #e95420;
  }

  .filters svg {
    grid-area: 1 / 1;
    width: 32px;
    fill: none;
    stroke: #fff;
    stroke-width: 3;
    pointer-events: none;
  }

  .info {
    display: flex;
    gap: 62px;
    flex-shrink: 0;
    height: 71px;
    margin: 0;
    padding-left: 28px;
    border-top: 2px solid #e9e9e9;
    color: #9a9a9a;
    line-height: 35px;
  }

  .info dd {
    margin: 0;
  }

  footer {
    box-sizing: border-box;
    position: relative;
    display: grid;
    grid-template-columns: 186px 383px 616px 580px 1fr;
    flex-shrink: 0;
    height: 45px;
    padding: 4px 0 0 40px;
    background: #fafafa;
    border-top: 1px solid #e4e4e4;
    white-space: nowrap;
  }

  .grip {
    position: absolute;
    right: 4px;
    bottom: 0;
    width: 38px;
    fill: none;
    stroke: #b0b0b0;
    stroke-width: 3;
  }

  .popup {
    position: absolute;
    box-sizing: border-box;
    padding: 8px 0;
    border-radius: 12px;
    background: #fafafa;
    box-shadow: 0 0 2px 1px rgba(0, 0, 0, 0.4), 0 3px 8px rgba(0, 0, 0, 0.3);
  }

  .context {
    left: 1279px;
    top: 325px;
    width: 642px;
    font-size: 29px;
  }

  .submenu {
    left: 1917px;
    top: 849px;
    width: 320px;
  }

  .popup ul + ul {
    border-top: 2px solid #e0e0e0;
  }

  .item {
    display: flex;
    align-items: center;
    justify-content: space-between;
    width: 100%;
    height: 52px;
    padding: 0 19px 2px 62px;
    white-space: nowrap;
  }

  .item.open {
    background: #dedede;
  }

  .item:disabled,
  kbd {
    color: #9a9a9a;
  }

  kbd {
    font: inherit;
  }

  .arrow {
    width: 12px;
    margin-right: 2px;
    fill: none;
    stroke: #3d3d3d;
    stroke-width: 2;
  }
</style>
